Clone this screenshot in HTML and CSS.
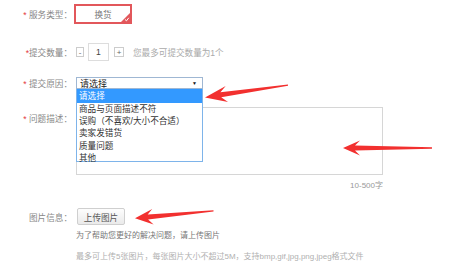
FILE: index.html
```html
<!DOCTYPE html>
<html>
    <head>
        <link rel="stylesheet" href="styles.css">
        <title>申请售后</title>
    </head>
    <body>
        <div class="applyForm">
            <div class="row rowType">
                <span class="label"><em>*</em> 服务类型：</span>
                <div class="typeBox">换货
                    <svg class="typeCorner" width="9" height="9" viewBox="0 0 9 9">
                        <polygon points="9,0 9,9 0,9" fill="#e2575b" />
                        <polyline points="4,6.5 5.5,7.8 7.8,4.8" fill="none" stroke="#ffffff" stroke-width="1" />
                    </svg>
                </div>
            </div>

            <div class="row rowCount">
                <span class="label"><em>*</em>提交数量：</span>
                <span class="stepBtn stepMinus">-</span>
                <span class="countBox">1</span>
                <span class="stepBtn stepPlus">+</span>
                <span class="hint">您最多可提交数量为1个</span>
            </div>

            <div class="row rowReason">
                <span class="label"><em>*</em> 提交原因：</span>
                <div class="selectWrap">
                    <div class="selectBox">请选择<span class="selectArrow">&#9660;</span></div>
                    <ul class="selectList">
                        <li class="selected">请选择</li>
                        <li>商品与页面描述不符</li>
                        <li>误购（不喜欢/大小不合适）</li>
                        <li>卖家发错货</li>
                        <li>质量问题</li>
                        <li>其他</li>
                    </ul>
                </div>
            </div>

            <div class="row rowDesc">
                <span class="label"><em>*</em> 问题描述：</span>
                <div class="descBox"></div>
            </div>
            <div class="counter">10-500字</div>

            <div class="row rowPic">
                <span class="label">图片信息：</span>
                <span class="uploadBtn">上传图片</span>
            </div>
            <div class="tip tipMain">为了帮助您更好的解决问题，请上传图片</div>
            <div class="tip tipSub">最多可上传5张图片，每张图片大小不超过5M，支持bmp,gif,jpg,png,jpeg格式文件</div>
        </div>

        <!-- red arrows drawn on top of the screenshot -->
        <svg class="arrows" width="456" height="265" viewBox="0 0 456 265">
            <polygon points="288,84.4 220.4,92.2 225.7,86 205,97.5 228,102 221.2,97.2 288,85.8" />
            <polygon points="432,147.3 355,145.6 360,140.5 343,148 360,155.5 355,150.4 432,148.7" />
            <polygon points="213.5,210.2 147.7,214.5 152.2,209.1 135,218.3 153.6,224.6 148.1,219.5 213.5,211.4" />
        </svg>
    </body>
</html>
```

FILE: styles.css
```css
body {
    margin: 0;
    background: #ffffff;
    font-family: "Liberation Sans", "Noto Sans CJK SC", sans-serif;
    font-size: 8.6px;
    color: #666666;
}
.applyForm {
    padding-top: 4px;
}
.row {
    display: flex;
    align-items: center;
}
.label {
    width: 72px;
    flex-shrink: 0;
    text-align: right;
    color: #888888;
}
.label em {
    font-style: normal;
    color: #e4393c;
}
.rowType {
    height: 20px;
}
.typeBox {
    position: relative;
    box-sizing: border-box;
    width: 58px;
    height: 20px;
    margin-left: 2px;
    border: 2px solid #e2575b;
    display: flex;
    align-items: center;
    justify-content: center;
    color: #777777;
}
.typeCorner {
    position: absolute;
    right: 0;
    bottom: 0;
}
.rowCount {
    height: 18px;
    margin-top: 19px;
}
.stepBtn {
    box-sizing: border-box;
    height: 10px;
    border: 1px solid #cccccc;
    display: flex;
    align-items: center;
    justify-content: center;
    color: #666666;
    font-size: 8px;
}
.stepMinus {
    width: 8px;
    margin-left: 4px;
}
.stepPlus {
    width: 10px;
    margin-left: 5px;
}
.countBox {
    box-sizing: border-box;
    width: 21px;
    height: 18px;
    margin-left: 4px;
    border: 1px solid #dddddd;
    display: flex;
    align-items: center;
    justify-content: center;
    color: #444444;
}
.hint {
    margin-left: 9px;
    color: #aaaaaa;
}
.rowReason {
    height: 12px;
    margin-top: 16px;
}
.selectWrap {
    position: relative;
    margin-left: 4px;
    width: 127px;
}
.selectBox {
    box-sizing: border-box;
    height: 12px;
    border: 1px solid #9fb7d3;
    padding-left: 3px;
    display: flex;
    align-items: center;
    color: #222222;
    font-size: 9px;
}
.selectArrow {
    margin-left: auto;
    margin-right: 5px;
    font-size: 5px;
    color: #111111;
}
.selectList {
    position: absolute;
    top: 12px;
    left: 0;
    z-index: 2;
    box-sizing: border-box;
    width: 127px;
    height: 73px;
    margin: 0;
    padding: 0;
    list-style: none;
    background: #ffffff;
    border: 1px solid #7eb4ea;
    border-top: none;
    color: #333333;
    font-size: 8.6px;
}
.selectList li {
    height: 12.2px;
    line-height: 12.2px;
    padding-left: 2px;
}
.selectList li.selected {
    height: 14px;
    line-height: 14px;
    background: #3399ff;
    color: #ffffff;
}
.rowDesc {
    align-items: flex-start;
    margin-top: 18px;
}
.rowDesc .label {
    margin-top: 5px;
}
.descBox {
    box-sizing: border-box;
    width: 307px;
    height: 68px;
    margin-left: 4px;
    border: 1px solid #d6d6d6;
}
.counter {
    width: 383px;
    margin-top: 5px;
    height: 12px;
    line-height: 12px;
    text-align: right;
    color: #999999;
    font-size: 8px;
}
.rowPic {
    height: 17px;
    margin-top: 16px;
}
.uploadBtn {
    box-sizing: border-box;
    width: 48px;
    height: 17px;
    margin-left: 5px;
    border: 1px solid #cfcfcf;
    border-radius: 2px;
    background: linear-gradient(#fdfdfd, #eaeaea);
    display: flex;
    align-items: center;
    justify-content: center;
    color: #555555;
}
.tip {
    margin-left: 76px;
    height: 12px;
    line-height: 12px;
    font-size: 8px;
    white-space: nowrap;
}
.tipMain {
    margin-top: 5px;
    color: #777777;
}
.tipSub {
    margin-top: 9px;
    color: #b0b0b0;
}
.arrows {
    position: absolute;
    left: 0;
    top: 0;
    z-index: 3;
    pointer-events: none;
}
.arrows polygon {
    fill: #f2302f;
}
```
